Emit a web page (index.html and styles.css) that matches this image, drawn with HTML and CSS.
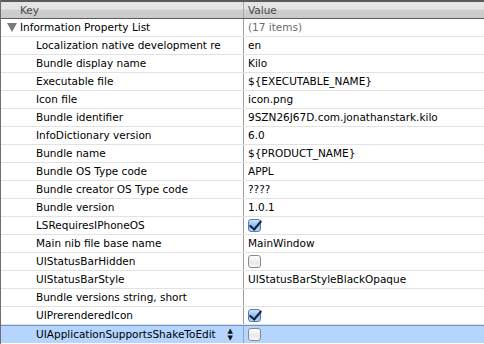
FILE: index.html
```html
<!DOCTYPE html>
<html lang="en">
<head>
    <meta charset="UTF-8">
    <title>Info.plist</title>
    <link rel="stylesheet" href="styles.css">
</head>
<body>
    <div class="plist">
        <div class="header">
            <div class="key">Key</div>
            <div class="value">Value</div>
        </div>
        <div class="row">
            <div class="key root"><span class="disclosure"></span>Information Property List</div>
            <div class="value muted">(17 items)</div>
        </div>
        <div class="row"><div class="key">Localization native development re</div><div class="value">en</div></div>
        <div class="row"><div class="key">Bundle display name</div><div class="value">Kilo</div></div>
        <div class="row"><div class="key">Executable file</div><div class="value">${EXECUTABLE_NAME}</div></div>
        <div class="row"><div class="key">Icon file</div><div class="value">icon.png</div></div>
        <div class="row"><div class="key">Bundle identifier</div><div class="value">9SZN26J67D.com.jonathanstark.kilo</div></div>
        <div class="row"><div class="key">InfoDictionary version</div><div class="value">6.0</div></div>
        <div class="row"><div class="key">Bundle name</div><div class="value">${PRODUCT_NAME}</div></div>
        <div class="row"><div class="key">Bundle OS Type code</div><div class="value">APPL</div></div>
        <div class="row"><div class="key">Bundle creator OS Type code</div><div class="value">????</div></div>
        <div class="row"><div class="key">Bundle version</div><div class="value">1.0.1</div></div>
        <div class="row"><div class="key">LSRequiresIPhoneOS</div><div class="value"><span class="check checked"></span></div></div>
        <div class="row"><div class="key">Main nib file base name</div><div class="value">MainWindow</div></div>
        <div class="row"><div class="key">UIStatusBarHidden</div><div class="value"><span class="check"></span></div></div>
        <div class="row"><div class="key">UIStatusBarStyle</div><div class="value">UIStatusBarStyleBlackOpaque</div></div>
        <div class="row"><div class="key">Bundle versions string, short</div><div class="value"></div></div>
        <div class="row"><div class="key">UIPrerenderedIcon</div><div class="value"><span class="check checked"></span></div></div>
        <div class="row selected">
            <div class="key">UIApplicationSupportsShakeToEdit<span class="stepper">&#9650;<br>&#9660;</span></div>
            <div class="value"><span class="check"></span></div>
        </div>
    </div>
</body>
</html>
```

FILE: styles.css
```css
* {
    margin: 0;
    padding: 0;
    box-sizing: border-box;
}

body {
    font-family: "DejaVu Sans", Verdana, sans-serif;
    font-size: 10.5px;
    color: #000;
    background-color: #fff;
}

.plist {
    width: 484px;
    height: 344px;
    overflow: hidden;
    border-left: 1px solid #6e6e6e;
}

/* Column header */
.header {
    display: flex;
    height: 19px;
    border-top: 2px solid #5a5a5a;
    border-bottom: 1px solid #5a5a5a;
    background: linear-gradient(#e4e4e4 0%, #e4e4e4 45%, #cdcdcd 50%, #cbcbcb 100%);
    color: #4a4a4a;
}

.header .key {
    padding-left: 19px;
    line-height: 16px;
    border-right: 1px solid #a9a9a9;
}

.header .value {
    line-height: 16px;
}

/* Rows */
.row {
    display: flex;
    height: 18px;
    border-bottom: 1px solid #e2e2e2;
}

.key {
    width: 243px;
    flex-shrink: 0;
    padding-left: 35px;
    line-height: 17px;
    white-space: nowrap;
    overflow: hidden;
    border-right: 1px solid #9c9c9c;
    position: relative;
}

.value {
    padding-left: 4px;
    line-height: 17px;
    white-space: nowrap;
    display: flex;
    align-items: center;
}

.muted {
    color: #6d6d6d;
}

.key.root {
    padding-left: 6px;
    display: flex;
    align-items: center;
}

.disclosure {
    width: 0;
    height: 0;
    border-left: 5px solid transparent;
    border-right: 5px solid transparent;
    border-top: 9px solid #7a7a7a;
    margin-right: 3px;
}

/* Checkboxes */
.check {
    display: inline-block;
    width: 13px;
    height: 13px;
    border: 1px solid #8a8a8a;
    border-radius: 3px;
    background: linear-gradient(#ffffff, #e9e9e9 60%, #f6f6f6);
    position: relative;
}

.check.checked {
    border-color: #557cb0;
    background: linear-gradient(#cfe3fb, #8fb8ea 55%, #b7d3f4);
}

.check.checked::after {
    content: "";
    position: absolute;
    left: 3px;
    top: -2px;
    width: 5px;
    height: 10px;
    border-right: 2px solid #10213d;
    border-bottom: 2px solid #10213d;
    transform: rotate(40deg);
}

/* Selected row */
.row.selected {
    background-color: #b5d5ff;
    border-top: 1px solid #6c93cf;
    border-bottom: none;
}

.row.selected .key {
    border-right-color: #8aa3c7;
}

.stepper {
    position: absolute;
    right: 10px;
    top: 2px;
    font-size: 7px;
    line-height: 7px;
    text-align: center;
    color: #111;
}
```
